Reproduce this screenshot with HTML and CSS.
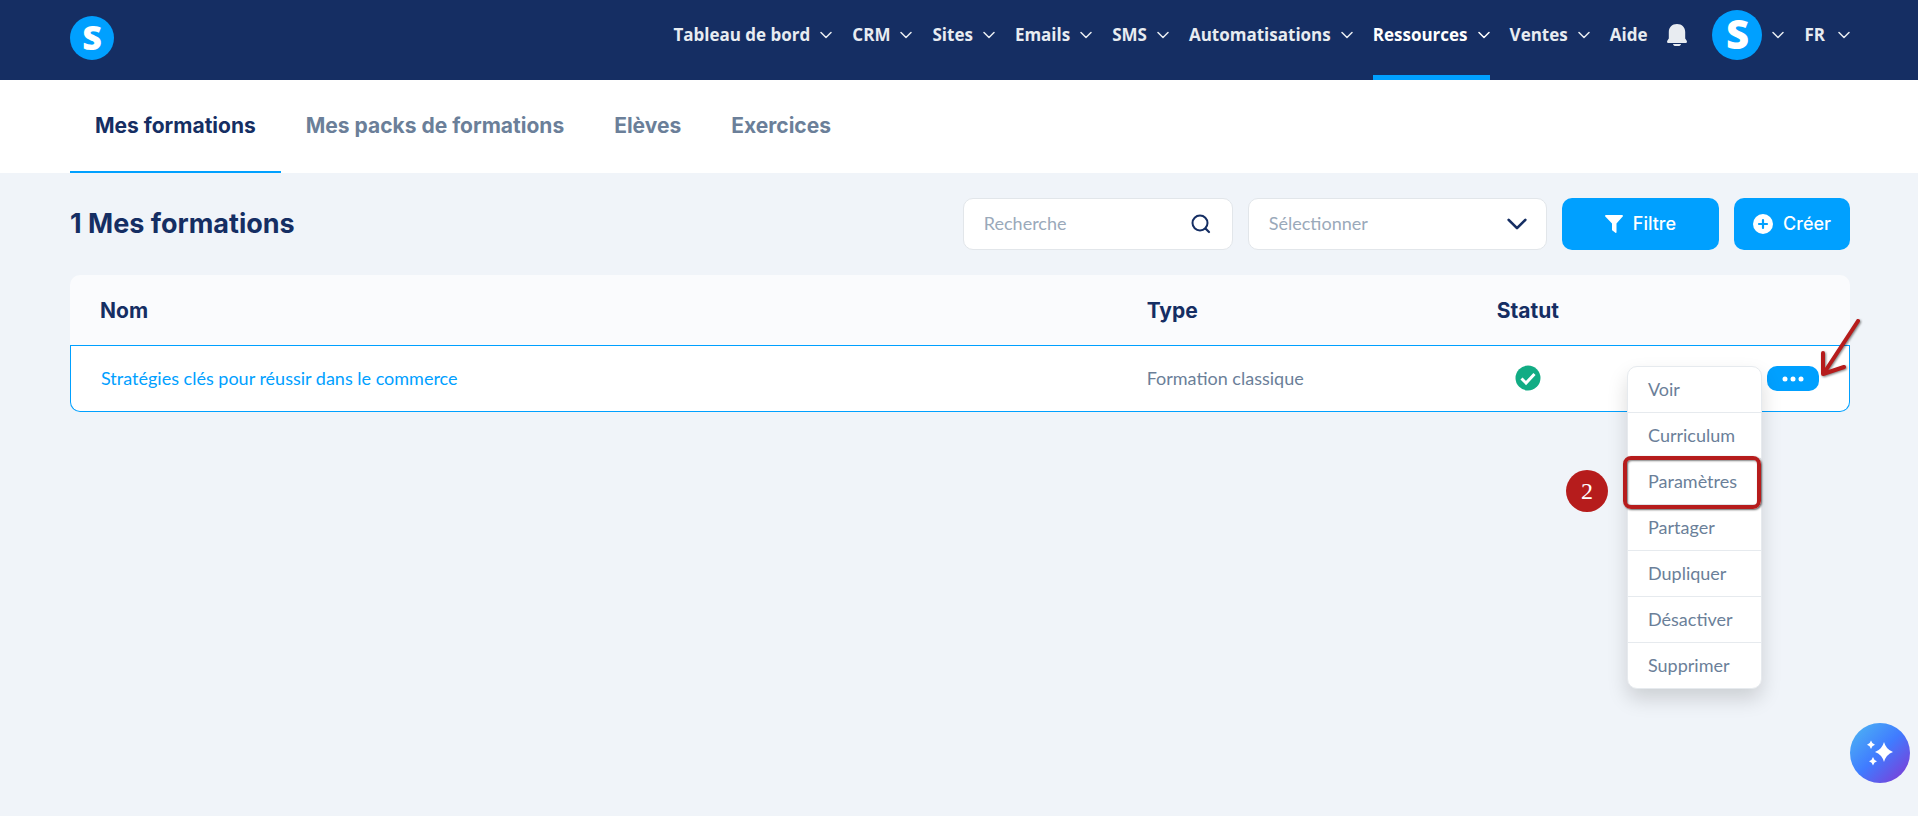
FILE: index.html
```html
<!DOCTYPE html>
<html lang="fr">
<head>
<meta charset="utf-8">
<meta name="viewport" content="width=device-width, initial-scale=1">
<title>Mes formations</title>
<link rel="stylesheet" href="styles.css">
</head>
<body>
<svg class="sprite" aria-hidden="true">
  <symbol id="chevron" viewBox="0 0 12 8"><path d="M1 1.500l5 5 5-5" fill="none" stroke="currentColor" stroke-width="1.500" stroke-linecap="round" stroke-linejoin="round"/></symbol>
</svg>
<header class="topbar">
  <a class="logo" href="#" aria-label="Accueil">S</a>
  <nav class="nav">
    <button class="nav-item">Tableau de bord <svg class="chevron"><use href="#chevron"/></svg></button>
    <button class="nav-item">CRM <svg class="chevron"><use href="#chevron"/></svg></button>
    <button class="nav-item">Sites <svg class="chevron"><use href="#chevron"/></svg></button>
    <button class="nav-item">Emails <svg class="chevron"><use href="#chevron"/></svg></button>
    <button class="nav-item">SMS <svg class="chevron"><use href="#chevron"/></svg></button>
    <button class="nav-item">Automatisations <svg class="chevron"><use href="#chevron"/></svg></button>
    <button class="nav-item is-active">Ressources <svg class="chevron"><use href="#chevron"/></svg></button>
    <button class="nav-item">Ventes <svg class="chevron"><use href="#chevron"/></svg></button>
    <a class="nav-item" href="#">Aide</a>
    <button class="nav-item" aria-label="Notifications">
      <svg class="bell" viewBox="0 0 20 22"><path d="M10 0C5 0 1.800 3.500 1.800 8v6.500L.3 16.800C-.3 18 .3 19 1.500 19h17c1.200 0 1.800-1 1.200-2.200l-1.500-2.300V8C18.200 3.500 15 0 10 0zM6 20c.3 1.400 1.300 2 2.500 2h3c1.200 0 2.200-.6 2.500-2z" fill="currentColor"/></svg>
    </button>
    <button class="nav-item account" aria-label="Compte"><span class="avatar">S</span><svg class="chevron"><use href="#chevron"/></svg></button>
    <button class="nav-item language">FR <svg class="chevron"><use href="#chevron"/></svg></button>
  </nav>
</header>
<nav class="tabs">
  <a class="tab is-active" href="#">Mes formations</a>
  <a class="tab" href="#">Mes packs de formations</a>
  <a class="tab" href="#">Elèves</a>
  <a class="tab" href="#">Exercices</a>
</nav>
<main class="content">
  <div class="toolbar">
    <h1 class="title">1 Mes formations</h1>
    <label class="field search">
      <input class="control" type="text" placeholder="Recherche" aria-label="Recherche">
      <svg class="search-icon" viewBox="0 0 20 20"><circle cx="9" cy="9" r="7.500" fill="none" stroke="currentColor" stroke-width="2"/><path d="M14.500 14.500L18 18" stroke="currentColor" stroke-width="2.200" stroke-linecap="round"/></svg>
    </label>
    <label class="field picker">
      <select class="control" aria-label="Sélectionner"><option>Sélectionner</option></select>
      <svg class="picker-icon" viewBox="0 0 12 8"><path d="M1 1.500l5 5 5-5" fill="none" stroke="currentColor" stroke-width="1.600" stroke-linecap="round" stroke-linejoin="round"/></svg>
    </label>
    <button class="button button-filter">
      <svg class="filter-icon" viewBox="0 0 18 18"><path d="M1 0h16c.9 0 1.300.9.700 1.600L11.500 8.500v8.800c0 .6-.6.9-1.100.5l-3-2.200a1 1 0 0 1-.4-.8V8.500L.3 1.600C-.3.900.1 0 1 0z" fill="currentColor"/></svg>
      Filtre
    </button>
    <button class="button">
      <svg class="create-icon" viewBox="0 0 20 20"><circle cx="10" cy="10" r="10" fill="currentColor"/><path d="M10 6v8M6 10h8" stroke="#00a0ff" stroke-width="2.200" stroke-linecap="round"/></svg>
      Créer
    </button>
  </div>
  <table class="courses">
    <colgroup><col class="col-name"><col class="col-type"><col class="col-status"><col></colgroup>
    <thead>
      <tr><th>Nom</th><th>Type</th><th class="centered">Statut</th><th></th></tr>
    </thead>
    <tbody>
      <tr>
        <td><a class="course-link" href="#">Stratégies clés pour réussir dans le commerce</a></td>
        <td>Formation classique</td>
        <td class="centered">
          <svg class="status-icon" viewBox="0 0 26 26" role="img" aria-label="Actif"><circle cx="13" cy="13" r="12.500" fill="#12ac84"/><path d="M6.500 13.500l4.500 4.500 8.500-9" fill="none" stroke="#fff" stroke-width="3"/></svg>
        </td>
        <td class="action-cell">
          <div class="actions">
            <button class="more" aria-label="Actions"><svg class="dots" viewBox="0 0 22 6"><circle cx="3" cy="3" r="2.500"/><circle cx="11" cy="3" r="2.500"/><circle cx="19" cy="3" r="2.500"/></svg></button>
            <ul class="menu">
              <li class="menu-item"><a href="#">Voir</a></li>
              <li class="menu-item"><a href="#">Curriculum</a></li>
              <li class="menu-item is-marked"><a href="#">Paramètres</a><span class="step">2</span></li>
              <li class="menu-item"><a href="#">Partager</a></li>
              <li class="menu-item"><a href="#">Dupliquer</a></li>
              <li class="menu-item"><a href="#">Désactiver</a></li>
              <li class="menu-item"><a href="#">Supprimer</a></li>
            </ul>
            <svg class="arrow" viewBox="0 0 48 64" aria-hidden="true"><path d="M42 6L8 58M7 38v21l21-7" fill="none" stroke="#b61c1c" stroke-width="4" stroke-linecap="round" stroke-linejoin="round"/></svg>
          </div>
        </td>
      </tr>
    </tbody>
  </table>
</main>
<button class="assistant" aria-label="Assistant">
  <svg class="sparkles" viewBox="0 0 26 26"><path d="M17 2q2 7.500 9 10-7 2.500-9 10-2-7.500-9-10 7-2.500 9-10zM4 .500q.8 3.200 4 4.300-3.200 1-4 4.200-.8-3.200-4-4.200 3.200-1.100 4-4.300zM6 17q.8 3.200 4 4.200-3.200 1.100-4 4.300-.8-3.200-4-4.300 3.200-1 4-4.200z" fill="#fff"/></svg>
</button>
</body>
</html>
```
FILE: styles.css
```css
* { box-sizing: border-box; }
body {
  margin: 0;
  min-height: 100vh;
  background: #f0f4f9;
  color: #6b7f99;
  font: 18px/24px Lato, sans-serif;
}
a { color: inherit; text-decoration: none; }
button { border: 0; background: none; padding: 0; color: inherit; font: inherit; cursor: pointer; }
.sprite { position: absolute; width: 0; height: 0; }

.topbar {
  display: flex;
  justify-content: space-between;
  height: 80px;
  padding: 0 68px 0 70px;
  background: #152e63;
}
.logo, .avatar {
  display: flex;
  align-items: center;
  justify-content: center;
  border-radius: 50%;
  background: #00a0ff;
  color: #fff;
  font-family: "Open Sans", sans-serif;
  font-weight: 800;
}
.logo { width: 44px; height: 44px; margin-top: 16px; padding-bottom: 2px; font-size: 34px; line-height: 42px; }
.avatar { width: 50px; height: 50px; padding-bottom: 2px; font-size: 40px; line-height: 48px; }
.nav { display: flex; gap: 20px; }
.nav-item {
  display: flex;
  align-items: center;
  gap: 10px;
  height: 80px;
  padding-bottom: 5px;
  border-bottom: 5px solid transparent;
  color: #e8ecf1;
  font-family: "Open Sans", sans-serif;
  font-size: 17px;
  font-weight: 700;
  white-space: nowrap;
}
.nav-item.is-active { color: #fff; border-color: #00a0ff; }
.chevron { width: 12px; height: 8px; }
.bell { width: 20px; height: 22px; }
.account { margin-left: 5px; }
.language { gap: 13px; }

.tabs {
  display: flex;
  padding: 0 70px;
  background: #fff;
  font: 700 21px/26px Inter, sans-serif;
}
.tab { padding: 33px 25px 32px; border-bottom: 2px solid transparent; }
.tab.is-active { color: #152e63; border-color: #00a0ff; }

.content { padding: 25px 68px 40px 70px; }
.toolbar { display: flex; align-items: center; gap: 15px; margin-bottom: 25px; }
.title {
  flex: 1;
  margin: 0;
  color: #152e63;
  font: 700 27px/34px Inter, sans-serif;
}
.field {
  display: flex;
  align-items: center;
  position: relative;
  height: 52px;
  border: 1px solid #e2e6ea;
  border-radius: 10px;
  background: #fff;
  color: #152e63;
}
.search { width: 270px; }
.picker { width: 299px; }
.control {
  width: 100%;
  height: 50px;
  padding: 0 60px 2px 20px;
  border: 0;
  border-radius: 10px;
  outline: 0;
  background: transparent;
  appearance: none;
  color: #9aa9ba;
  font: inherit;
}
.control::placeholder { color: #9aa9ba; opacity: 1; }
.search-icon, .picker-icon { position: absolute; pointer-events: none; }
.search-icon { right: 21px; width: 20px; height: 20px; }
.picker-icon { right: 19px; width: 20px; height: 14px; }
.button {
  display: flex;
  align-items: center;
  justify-content: center;
  gap: 10px;
  height: 52px;
  padding: 0 19px;
  border-radius: 10px;
  background: #00a0ff;
  color: #fff;
  font: 500 18px/24px Inter, sans-serif;
}
.button-filter { padding: 0 43px; }
.filter-icon { width: 18px; height: 18px; }
.create-icon { width: 20px; height: 20px; }

.courses { width: 100%; table-layout: fixed; border-collapse: separate; border-spacing: 0; }
.col-name { width: 58.8%; }
.col-type { width: 17.5%; }
.col-status { width: 11.2%; }
th {
  height: 70px;
  padding: 2px 30px 0;
  background: #fafbfd;
  color: #152e63;
  font: 700 21px/26px Inter, sans-serif;
  text-align: left;
}
td {
  height: 67px;
  padding: 0 30px 2px;
  border: solid #00a0ff;
  border-width: 1px 0;
  background: #fff;
}
th:first-child { border-top-left-radius: 10px; }
th:last-child { border-top-right-radius: 10px; }
td:first-child { border-left-width: 1px; border-bottom-left-radius: 10px; }
td:last-child { border-right-width: 1px; border-bottom-right-radius: 10px; }
.centered { padding-left: 0; padding-right: 0; text-align: center; }
.action-cell { padding-bottom: 0; }
.course-link { color: #00a0ff; }
.status-icon { display: block; width: 26px; height: 26px; margin: 0 auto; }

.actions { display: flex; justify-content: flex-end; position: relative; }
.more {
  display: flex;
  align-items: center;
  justify-content: center;
  width: 52px;
  height: 25px;
  border-radius: 10px;
  background: #00a0ff;
}
.dots { width: 22px; height: 6px; fill: #fff; }
.menu {
  position: absolute;
  top: 0;
  right: 57px;
  z-index: 1;
  width: 135px;
  margin: 0;
  padding: 0;
  border: 1px solid #e6eaee;
  border-radius: 10px;
  background: #fff;
  box-shadow: 0 10px 20px rgba(0, 0, 0, 0.15);
  line-height: 23px;
  list-style: none;
}
.menu-item { position: relative; }
.menu-item a { display: block; padding: 11px 20px; }
.menu-item + .menu-item { border-top: 1px solid #e6eaee; }
.is-marked::after {
  content: "";
  position: absolute;
  inset: -3px 0 -5px -5px;
  z-index: 1;
  border: 4px solid #b61c1c;
  border-radius: 8px;
  box-shadow: 1px 1px 2px rgba(0, 0, 0, 0.6), inset 1px 1px 2px rgba(0, 0, 0, 0.5);
  pointer-events: none;
}
.step {
  position: absolute;
  top: 11px;
  right: 153px;
  width: 42px;
  height: 42px;
  border-radius: 50%;
  background: #b61c1c;
  color: #fff;
  font: 24px/42px "Liberation Serif", serif;
  text-align: center;
}
.arrow {
  position: absolute;
  right: -45px;
  bottom: 12px;
  z-index: 2;
  width: 48px;
  height: 64px;
  filter: drop-shadow(1px 1px 1px rgba(0, 0, 0, 0.5));
}
.assistant {
  display: flex;
  align-items: center;
  justify-content: center;
  position: fixed;
  right: 8px;
  bottom: 33px;
  width: 60px;
  height: 60px;
  border-radius: 50%;
  background: linear-gradient(135deg, #4badf5 10%, #407bff 50%, #7b3fd8 92%);
}
.sparkles { width: 26px; height: 26px; }
```
